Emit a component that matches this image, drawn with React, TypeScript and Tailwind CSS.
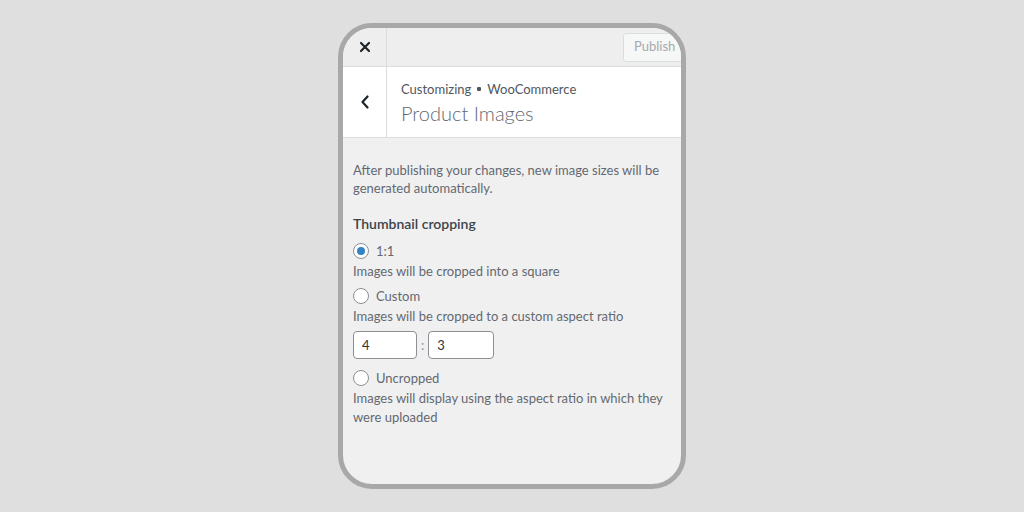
import React from "react";

const font = { fontFamily: 'Lato, "Noto Sans", sans-serif' };

function Radio({ checked }: { checked?: boolean }) {
  return (
    <span className="w-[16px] h-[16px] rounded-full border border-[#8c8f94] bg-white flex items-center justify-center shrink-0">
      {checked && <span className="w-[8px] h-[8px] rounded-full bg-[#3582c4]" />}
    </span>
  );
}

export default function App() {
  return (
    <div className="w-full h-[512px] bg-[#dfdfe0] flex items-center justify-center" style={font}>
      <div className="w-[348px] h-[466px] border-[5px] border-[#a8a8a8] rounded-[34px] overflow-hidden bg-[#f0f0f1] flex flex-col">
        <div className="h-[39px] bg-[#eeeeee] border-b border-[#dcdcde] flex items-stretch shrink-0">
          <div className="w-[44px] border-r border-[#dcdcde] flex items-center justify-center">
            <svg width="12" height="12" viewBox="0 0 12 12">
              <path d="M2 2 L10 10 M10 2 L2 10" stroke="#1d2327" strokeWidth="2.2" strokeLinecap="round" />
            </svg>
          </div>
          <div className="flex-1" />
          <div className="flex items-center">
            <div className="w-[80px] h-[29px] -mr-[22px] border border-[#dcdcde] bg-[#f6f7f7] rounded-[3px] text-[13px] text-[#a7aaad] flex items-center pl-[10px]">
              Publish
            </div>
          </div>
        </div>
        <div className="h-[71px] bg-white border-b border-[#dcdcde] flex items-stretch shrink-0">
          <div className="w-[44px] border-r border-[#dcdcde] flex items-center justify-center">
            <svg width="10" height="14" viewBox="0 0 10 14">
              <path d="M7.5 1.5 L2.5 7 L7.5 12.5" fill="none" stroke="#1d2327" strokeWidth="2.2" strokeLinecap="round" strokeLinejoin="round" />
            </svg>
          </div>
          <div className="pl-[14px] pt-[13px] flex flex-col">
            <div className="text-[13px] leading-[18px] text-[#50575e] flex items-center">
              <span>Customizing</span>
              <span className="mx-[6px] w-[4px] h-[4px] bg-[#50575e] rounded-[1px] inline-block" />
              <span>WooCommerce</span>
            </div>
            <div className="text-[20px] leading-[28px] font-light text-[#646970] mt-[1px]">Product Images</div>
          </div>
        </div>
        <div className="px-[10px] pt-[23px] text-[13px] leading-[18px] text-[#646970]">
          <p>After publishing your changes, new image sizes will be generated automatically.</p>
          <div className="mt-[17px] text-[14px] font-semibold text-[#3c434a] leading-[20px]">Thumbnail cropping</div>
          <div className="mt-[7px] flex items-center gap-[7px] h-[20px]">
            <Radio checked />
            <span>1:1</span>
          </div>
          <div className="mt-[1px]">Images will be cropped into a square</div>
          <div className="mt-[6px] flex items-center gap-[7px] h-[20px]">
            <Radio />
            <span>Custom</span>
          </div>
          <div className="mt-[1px]">Images will be cropped to a custom aspect ratio</div>
          <div className="mt-[6px] flex items-center gap-[4px]">
            <div className="w-[64px] h-[28px] border border-[#8c8f94] rounded-[4px] bg-white text-[#2c3338] flex items-center pl-[8px]">4</div>
            <span className="text-[#8c8f94]">:</span>
            <div className="w-[66px] h-[28px] border border-[#8c8f94] rounded-[4px] bg-white text-[#2c3338] flex items-center pl-[8px]">3</div>
          </div>
          <div className="mt-[9px] flex items-center gap-[7px] h-[20px]">
            <Radio />
            <span>Uncropped</span>
          </div>
          <div className="mt-[1px] leading-[19px]">Images will display using the aspect ratio in which they were uploaded</div>
        </div>
      </div>
    </div>
  );
}
